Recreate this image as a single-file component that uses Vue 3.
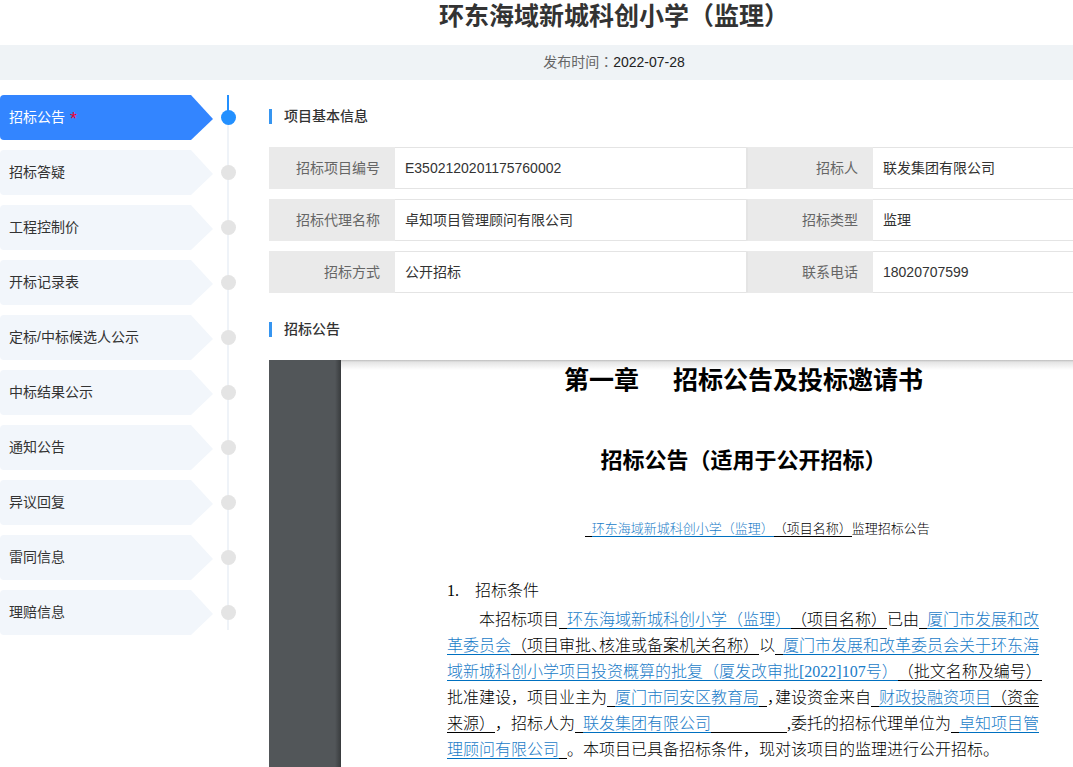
<script setup>
import { ref } from 'vue'

const sections = [
  '招标公告',
  '招标答疑',
  '工程控制价',
  '开标记录表',
  '定标/中标候选人公示',
  '中标结果公示',
  '通知公告',
  '异议回复',
  '雷同信息',
  '理赔信息'
]
const active = ref(0)

const info = [
  ['招标项目编号', 'E3502120201175760002', '招标人', '联发集团有限公司'],
  ['招标代理名称', '卓知项目管理顾问有限公司', '招标类型', '监理'],
  ['招标方式', '公开招标', '联系电话', '18020707599']
]
</script>

<template>
  <div class="page">
    <header class="head">
      <h1>环东海域新城科创小学（监理）</h1>
      <p class="published"><span>发布时间<i class="colon">：</i></span><time datetime="2022-07-28">2022-07-28</time></p>
    </header>

    <div class="body">
      <nav class="side">
        <ul>
          <li v-for="(name, i) in sections" :key="name" :class="{ active: i === active }">
            <a href="#" @click.prevent="active = i">{{ name }}<span v-if="i === 0" class="star">*</span></a>
            <span class="dot"></span>
          </li>
        </ul>
      </nav>

      <main class="main">
        <h2>项目基本信息</h2>
        <table>
          <colgroup>
            <col class="c-label"><col class="c-value"><col class="c-label2"><col>
          </colgroup>
          <tbody>
            <tr v-for="row in info" :key="row[0]">
              <th scope="row">{{ row[0] }}</th>
              <td>{{ row[1] }}</td>
              <th scope="row">{{ row[2] }}</th>
              <td>{{ row[3] }}</td>
            </tr>
          </tbody>
        </table>

        <h2>招标公告</h2>
        <div class="viewer">
          <article class="sheet">
            <h3 class="chapter"><span>第一章</span><span>招标公告及投标邀请书</span></h3>
            <h3 class="subject">招标公告（适用于公开招标）</h3>
            <p class="caption"><span class="u gap"></span><span class="f">环东海域新城科创小学（监理）</span><span class="u">（项目名称）</span>监理招标公告</p>
            <h4><span>1.</span><span>招标条件</span></h4>
            <div class="text">
              <p class="first">本招标项目<span class="u gap"></span><span class="f">环东海域新城科创小学（监理）</span><span class="u">（项目名称）</span>已由<span class="u gap"></span><span class="f">厦门市发展和改</span></p>
              <p><span class="f">革委员会</span><span class="u">（项目审批<span class="half">、</span>核准或备案机关名称）</span>以<span class="u gap"></span><span class="f">厦门市发展和改革委员会关于环东海</span></p>
              <p><span class="f">域新城科创小学项目投资概算的批复（厦发改审批[2022]107号）</span><span class="u">（批文名称及编号）</span></p>
              <p>批准建设，项目业主为<span class="u gap"></span><span class="f">厦门市同安区教育局</span><span class="u gap"></span><span class="half">，</span>建设资金来自<span class="u gap"></span><span class="f">财政投融资项目</span><span class="u">（资金</span></p>
              <p><span class="u">来源）</span>，招标人为<span class="u gap"></span><span class="f">联发集团有限公司</span><span class="u blank"></span>,委托的招标代理单位为<span class="u gap"></span><span class="f">卓知项目管</span></p>
              <p><span class="f">理顾问有限公司</span><span class="u gap"></span>。本项目已具备招标条件，现对该项目的监理进行公开招标。</p>
            </div>
          </article>
        </div>
      </main>
    </div>
  </div>
</template>

<style>
html,
body {
  margin: 0;
  height: 100%;
  background: #fff;
}
body {
  overflow: hidden;
}
#app {
  height: 100%;
}
</style>

<style scoped>
.page {
  display: flex;
  flex-direction: column;
  height: 100%;
  font: 14px/20px "Liberation Sans", "Noto Sans CJK SC", sans-serif;
  color: #333;
}
h1, h2, h3, h4, p, ul {
  margin: 0;
  padding: 0;
}
.head h1 {
  padding-left: 155px;
  font-size: 25px;
  line-height: 32px;
  padding-bottom: 13px;
  text-align: center;
}
.published {
  padding-left: 155px;
  line-height: 35px;
  background: #eff3f6;
  color: #666;
  text-align: center;
}
.published time {
  color: #222;
}
.colon {
  font-family: "Noto Sans CJK TC", sans-serif;
  font-style: normal;
  line-height: 1;
}
.body {
  display: flex;
  flex: 1;
  min-height: 0;
  padding-top: 15px;
}
.side {
  flex: 0 0 269px;
}
.side ul {
  display: flex;
  flex-direction: column;
  gap: 10px;
  list-style: none;
}
.side li {
  position: relative;
  display: flex;
  align-items: center;
  height: 45px;
}
.side li::before {
  content: "";
  position: absolute;
  left: 227px;
  top: 0;
  width: 2px;
  height: 55px;
  background: #eff3f8;
}
.side li:last-child::before {
  height: 40px;
}
.side li.active::after {
  content: "";
  position: absolute;
  left: 227px;
  top: 0;
  width: 2px;
  height: 22px;
  background: #2390ff;
}
.side a {
  width: 204px;
  padding-left: 9px;
  line-height: 45px;
  color: #333;
  text-decoration: none;
  background: #f2f6fb;
  border-radius: 4px 0 0 4px;
  clip-path: polygon(0 0, 191px 0, 100% 24px, 191px 100%, 0 100%);
}
.side .active a {
  background: #3385ff;
  color: #fff;
}
.star {
  margin-left: 5px;
  color: #f00030;
  font-size: 18px;
  line-height: 1;
  vertical-align: -3px;
}
.dot {
  position: relative;
  z-index: 1;
  width: 15px;
  height: 15px;
  margin-left: 8px;
  border-radius: 50%;
  background: #e4e4e4;
}
.active .dot {
  background: #2390ff;
}
.main {
  display: flex;
  flex: 1;
  flex-direction: column;
  min-width: 0;
}
h2 {
  display: flex;
  align-items: center;
  gap: 12px;
  padding: 11px 0;
  font-size: 14px;
  line-height: 20px;
  font-weight: 500;
}
h2::before {
  content: "";
  width: 3px;
  height: 15px;
  background: #3695f0;
}
table {
  width: 100%;
  table-layout: fixed;
  border-collapse: separate;
  border-spacing: 0 10px;
}
.c-label {
  width: 126px;
}
.c-value {
  width: 351px;
}
.c-label2 {
  width: 127px;
}
th, td {
  box-sizing: border-box;
  height: 42px;
  padding: 0 10px;
  border: solid #e4e4e4;
  border-width: 1px 0;
  text-align: left;
  white-space: nowrap;
}
th {
  padding-right: 15px;
  border-color: #eaeaea;
  background: #eaeaea;
  color: #666;
  font-weight: 400;
  text-align: right;
}
th:nth-child(3) {
  border-left: 2px solid #e4e4e4;
}
table + h2 {
  padding: 16px 0 21px;
}
.viewer {
  flex: 1;
  min-height: 0;
  padding-left: 72px;
  overflow: hidden;
  background: linear-gradient(to right, transparent 66px, #383b3d 72px), #525659;
}
.sheet {
  height: 100%;
  padding: 0 33px 0 106px;
  box-sizing: border-box;
  background: linear-gradient(#bdbdbd 0, #e4e4e4 2px, #fff 10px);
  color: #000;
  font-family: "Liberation Serif", "Noto Sans CJK SC", serif;
  font-weight: 300;
  text-spacing-trim: space-all;
  white-space: nowrap;
}
.chapter {
  display: flex;
  justify-content: center;
  gap: 34px;
  padding-top: 4px;
  font-size: 25px;
  line-height: 34px;
}
.subject {
  padding-top: 48px;
  font-size: 22px;
  line-height: 30px;
  text-align: center;
}
.caption {
  padding: 42px 0 0 28px;
  font-size: 13px;
  line-height: 22px;
  text-align: center;
}
h4 {
  display: flex;
  gap: 16px;
  padding-top: 38px;
  font-size: 16px;
  line-height: 26px;
  font-weight: inherit;
}
.text {
  padding-top: 3px;
  font-size: 16px;
  line-height: 26px;
}
.first {
  padding-left: 32px;
}
.u {
  border-bottom: 1px solid #000;
}
.f {
  color: #1a7cc8;
  border-bottom: 1px solid #0070c0;
}
.gap::before {
  content: "\2002";
}
.blank {
  padding-left: 76px;
}
.half {
  font-feature-settings: "halt";
}
</style>
